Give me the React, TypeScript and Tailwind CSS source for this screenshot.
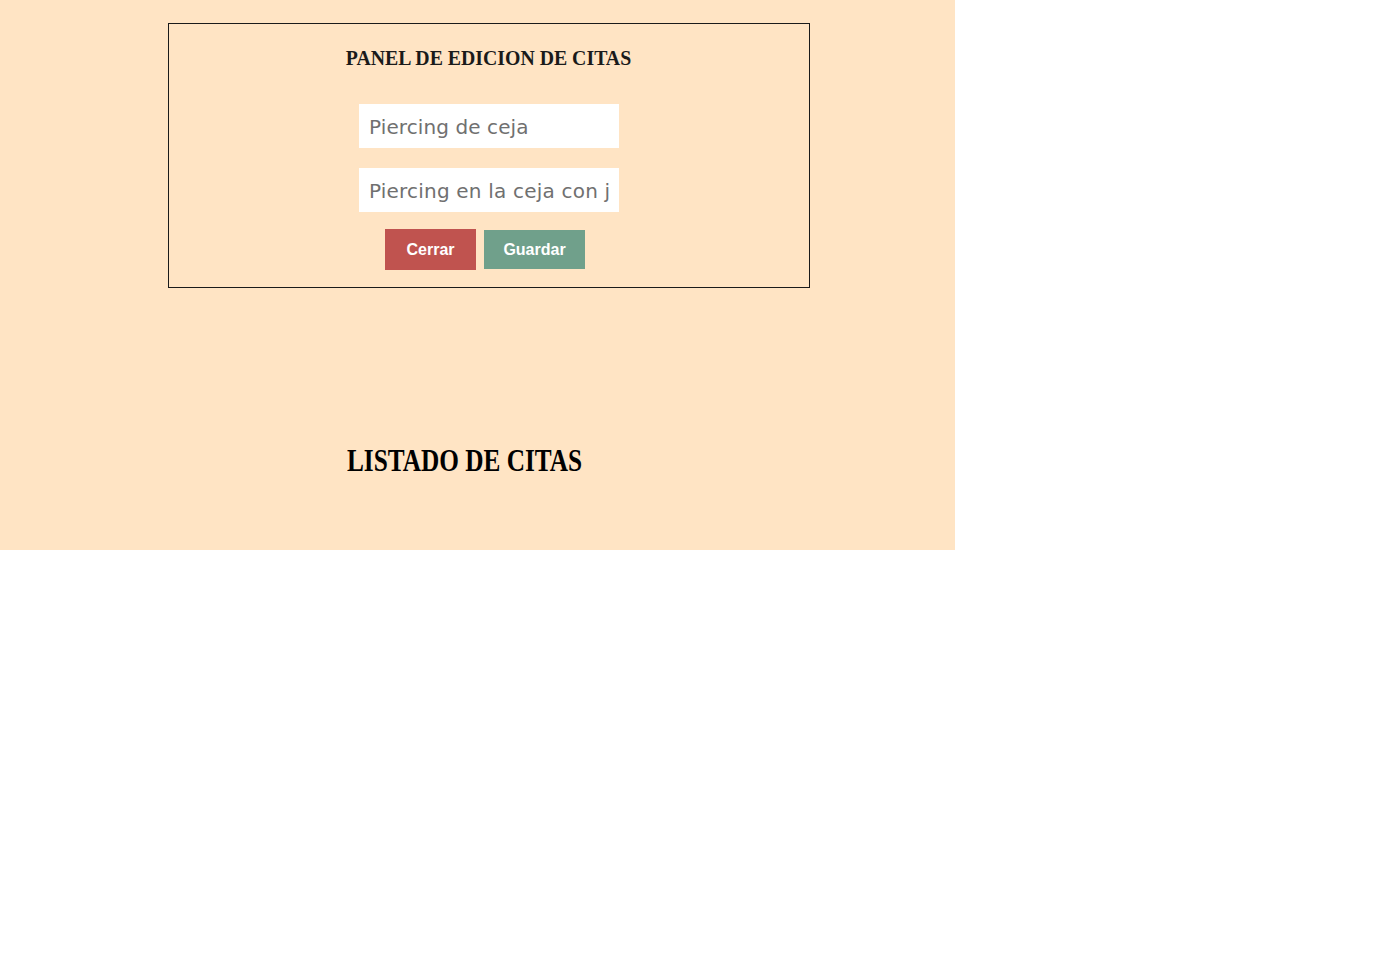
export default function App() {
  return (
    <div className="w-[955px] h-[550px] bg-[#FFE4C4] pt-[23px]">
      <div className="ml-[168px] w-[642px] h-[265px] border border-[#1a1a1a] flex flex-col items-center">
        <h2 className="mt-[21px] text-[22px] leading-[26px] font-bold text-[#1a1a1a] scale-x-[0.9] font-['Liberation_Serif',serif]">
          PANEL DE EDICION DE CITAS
        </h2>
        <input
          readOnly
          value="Piercing de ceja"
          className="mt-[33px] w-[260px] h-[44px] bg-white pl-[10px] pr-[6px] pt-[1px] text-[20px] tracking-[0.1px] text-[#707070] outline-none font-['DejaVu_Sans',sans-serif]"
        />
        <input
          readOnly
          value="Piercing en la ceja con j"
          className="mt-[20px] w-[260px] h-[44px] bg-white pl-[10px] pr-[6px] pt-[1px] text-[20px] tracking-[0.2px] text-[#707070] outline-none font-['DejaVu_Sans',sans-serif]"
        />
        <div className="mt-[17px] mr-[8px] flex items-start gap-[8px] font-['Liberation_Sans',Arial,sans-serif]">
          <button className="w-[91px] h-[41px] bg-[#C0534F] text-white text-[16px] font-bold">Cerrar</button>
          <button className="mt-[1px] w-[101px] h-[39px] bg-[#70A08B] text-white text-[16px] font-bold">Guardar</button>
        </div>
      </div>
      <h1 className="ml-[347px] mt-[153px] text-[32px] leading-[38px] font-bold text-black origin-left scale-x-[0.79] font-['Liberation_Serif',serif]">
        LISTADO DE CITAS
      </h1>
    </div>
  );
}
